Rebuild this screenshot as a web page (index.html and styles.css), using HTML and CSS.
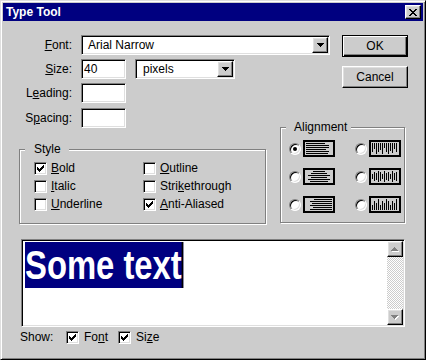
FILE: index.html
```html
<!DOCTYPE html>
<html lang="en">
<head>
    <meta charset="UTF-8">
    <title>Type Tool</title>
    <link rel="stylesheet" href="styles.css">
</head>
<body>
    <div class="window">
        <!-- Title bar -->
        <div class="titlebar">
            <span class="title">Type Tool</span>
            <span class="close-btn">
                <svg width="8" height="7" viewBox="0 0 8 7"><path d="M0 0h2v1H0z M6 0h2v1H6z M1 1h2v1H1z M5 1h2v1H5z M2 2h4v1H2z M3 3h2v1H3z M2 4h4v1H2z M1 5h2v1H1z M5 5h2v1H5z M0 6h2v1H0z M6 6h2v1H6z" fill="#000"/></svg>
            </span>
        </div>

        <div class="dialog">
            <!-- Font + OK -->
            <div class="top-row">
                <div class="field-row">
                    <label class="field-label"><u>F</u>ont:</label>
                    <div class="combo sunken combo-font">
                        <span class="combo-text">Arial Narrow</span>
                        <span class="combo-btn"><svg width="7" height="4" viewBox="0 0 7 4"><path d="M0 0h7v1H0z M1 1h5v1H1z M2 2h3v1H2z M3 3h1v1H3z" fill="#000"/></svg></span>
                    </div>
                </div>
                <button class="btn btn-default">OK</button>
            </div>

            <div class="lower">
                <div class="left-col">
                    <div class="field-row">
                        <label class="field-label"><u>S</u>ize:</label>
                        <input class="text-input sunken" type="text" value="40">
                        <div class="combo sunken combo-unit">
                            <span class="combo-text">pixels</span>
                            <span class="combo-btn"><svg width="7" height="4" viewBox="0 0 7 4"><path d="M0 0h7v1H0z M1 1h5v1H1z M2 2h3v1H2z M3 3h1v1H3z" fill="#000"/></svg></span>
                        </div>
                    </div>
                    <div class="field-row">
                        <label class="field-label">L<u>e</u>ading:</label>
                        <input class="text-input sunken" type="text" value="">
                    </div>
                    <div class="field-row spacing-row">
                        <label class="field-label">S<u>p</u>acing:</label>
                        <input class="text-input sunken" type="text" value="">
                    </div>

                    <!-- Style -->
                    <div class="group style-group">
                        <span class="group-title style-title">Style</span>
                        <div class="check-grid">
                            <span class="check"><span class="box sunken"><svg width="7" height="7" viewBox="0 0 7 7"><path d="M0 2h1v3H0z M1 3h1v3H1z M2 4h1v3H2z M3 3h1v3H3z M4 2h1v3H4z M5 1h1v3H5z M6 0h1v3H6z" fill="#000"/></svg></span><span><u>B</u>old</span></span>
                            <span class="check"><span class="box sunken"></span><span><u>I</u>talic</span></span>
                            <span class="check"><span class="box sunken"></span><span><u>U</u>nderline</span></span>
                            <span class="check"><span class="box sunken"></span><span><u>O</u>utline</span></span>
                            <span class="check"><span class="box sunken"></span><span>Stri<u>k</u>ethrough</span></span>
                            <span class="check"><span class="box sunken"><svg width="7" height="7" viewBox="0 0 7 7"><path d="M0 2h1v3H0z M1 3h1v3H1z M2 4h1v3H2z M3 3h1v3H3z M4 2h1v3H4z M5 1h1v3H5z M6 0h1v3H6z" fill="#000"/></svg></span><span><u>A</u>nti-Aliased</span></span>
                        </div>
                    </div>
                </div>

                <div class="right-col">
                    <button class="btn">Cancel</button>

                    <!-- Alignment -->
                    <div class="group align-group">
                        <span class="group-title align-title">Alignment</span>
                        <div class="align-grid">
                            <span class="align-option">
                                <span class="radio checked"></span>
                                <svg class="align-icon" width="32" height="17" viewBox="0 0 32 17"><rect x="1" y="1" width="30" height="15" fill="none" stroke="#000" stroke-width="2"/><path d="M3 3.5h19 M3 5.5h23 M3 7.5h23 M3 9.5h20 M3 11.5h23 M3 13.5h22" stroke="#000"/></svg>
                            </span>
                            <span class="align-option">
                                <span class="radio"></span>
                                <svg class="align-icon" width="32" height="17" viewBox="0 0 32 17"><rect x="1" y="1" width="30" height="15" fill="none" stroke="#000" stroke-width="2"/><path d="M3.5 3v9 M5.5 3v6 M7.5 3v11 M9.5 3v9 M11.5 3v7 M13.5 3v11 M15.5 3v5 M17.5 3v9 M19.5 3v11 M21.5 3v8 M23.5 3v10 M25.5 3v6 M27.5 3v9" stroke="#000"/></svg>
                            </span>
                            <span class="align-option">
                                <span class="radio"></span>
                                <svg class="align-icon" width="32" height="17" viewBox="0 0 32 17"><rect x="1" y="1" width="30" height="15" fill="none" stroke="#000" stroke-width="2"/><path d="M10 3.5h12 M8 5.5h16 M5 7.5h22 M8 9.5h16 M5 11.5h22 M7 13.5h18" stroke="#000"/></svg>
                            </span>
                            <span class="align-option">
                                <span class="radio"></span>
                                <svg class="align-icon" width="32" height="17" viewBox="0 0 32 17"><rect x="1" y="1" width="30" height="15" fill="none" stroke="#000" stroke-width="2"/><path d="M3.5 6v5 M5.5 4v9 M7.5 5v7 M9.5 3v11 M11.5 4v9 M13.5 6v5 M15.5 3v11 M17.5 5v7 M19.5 4v9 M21.5 6v5 M23.5 3v11 M25.5 5v7 M27.5 4v9" stroke="#000"/></svg>
                            </span>
                            <span class="align-option">
                                <span class="radio"></span>
                                <svg class="align-icon" width="32" height="17" viewBox="0 0 32 17"><rect x="1" y="1" width="30" height="15" fill="none" stroke="#000" stroke-width="2"/><path d="M11 3.5h18 M7 5.5h22 M9 7.5h20 M7 9.5h22 M10 11.5h19 M7 13.5h22" stroke="#000"/></svg>
                            </span>
                            <span class="align-option">
                                <span class="radio"></span>
                                <svg class="align-icon" width="32" height="17" viewBox="0 0 32 17"><rect x="1" y="1" width="30" height="15" fill="none" stroke="#000" stroke-width="2"/><path d="M3.5 9v5 M5.5 5v9 M7.5 7v7 M9.5 3v11 M11.5 9v5 M13.5 5v9 M15.5 7v7 M17.5 3v11 M19.5 5v9 M21.5 9v5 M23.5 5v9 M25.5 7v7 M27.5 3v11" stroke="#000"/></svg>
                            </span>
                        </div>
                    </div>
                </div>
            </div>

            <!-- Preview -->
            <div class="preview sunken">
                <div class="preview-text">
                    <span class="selection">Some text</span>
                </div>
                <div class="scrollbar">
                    <span class="scroll-btn"><svg width="8" height="5" viewBox="0 0 8 5"><path d="M4 1h1v1H4z M3 2h3v1H3z M2 3h5v1H2z M1 4h7v1H1z" fill="#fff"/><path d="M3 0h1v1H3z M2 1h3v1H2z M1 2h5v1H1z M0 3h7v1H0z" fill="#808080"/></svg></span>
                    <span class="scroll-track"></span>
                    <span class="scroll-btn"><svg width="8" height="5" viewBox="0 0 8 5"><path d="M1 1h7v1H1z M2 2h5v1H2z M3 3h3v1H3z M4 4h1v1H4z" fill="#fff"/><path d="M0 0h7v1H0z M1 1h5v1H1z M2 2h3v1H2z M3 3h1v1H3z" fill="#808080"/></svg></span>
                </div>
            </div>

            <!-- Show -->
            <div class="show-row">
                <span class="show-label">Show:</span>
                <span class="check"><span class="box sunken"><svg width="7" height="7" viewBox="0 0 7 7"><path d="M0 2h1v3H0z M1 3h1v3H1z M2 4h1v3H2z M3 3h1v3H3z M4 2h1v3H4z M5 1h1v3H5z M6 0h1v3H6z" fill="#000"/></svg></span><span>Fo<u>n</u>t</span></span>
                <span class="check"><span class="box sunken"><svg width="7" height="7" viewBox="0 0 7 7"><path d="M0 2h1v3H0z M1 3h1v3H1z M2 4h1v3H2z M3 3h1v3H3z M4 2h1v3H4z M5 1h1v3H5z M6 0h1v3H6z" fill="#000"/></svg></span><span>Si<u>z</u>e</span></span>
            </div>
        </div>
    </div>
</body>
</html>
```

FILE: styles.css
```css
/* Reset */
* {
    margin: 0;
    padding: 0;
    box-sizing: border-box;
}

body {
    font: 12px "Liberation Sans", Arial, sans-serif;
    color: #000;
    background: #ccc;
}

u {
    text-underline-offset: 1px;
}

/* Window frame */
.window {
    width: 426px;
    height: 360px;
    background: #ccc;
    border: 1px solid;
    border-color: #dfdfdf #000 #000 #dfdfdf;
    box-shadow: inset 1px 1px #fff, inset -1px -1px #808080;
    padding: 2px;
}

.titlebar {
    height: 18px;
    background: #000080;
    color: #fff;
    display: flex;
    align-items: center;
    justify-content: space-between;
    padding: 0 2px 0 3px;
}

.title {
    font-weight: bold;
    font-size: 12px;
}

/* Raised 3D look */
.close-btn,
.combo-btn,
.scroll-btn {
    display: flex;
    align-items: center;
    justify-content: center;
    background: #ccc;
    border: 1px solid;
    border-color: #fff #000 #000 #fff;
    box-shadow: inset -1px -1px #808080, inset 1px 1px #dfdfdf;
}

.close-btn {
    width: 16px;
    height: 14px;
}

/* Sunken 3D look */
.sunken {
    background: #fff;
    border: 1px solid;
    border-color: #808080 #fff #fff #808080;
    box-shadow: inset 1px 1px #000, inset -1px -1px #dfdfdf;
}

/* Dialog body */
.dialog {
    padding: 14px 15px 0 16px;
}

.top-row {
    display: flex;
    justify-content: space-between;
    align-items: flex-start;
}

.field-row {
    display: flex;
    align-items: center;
    height: 20px;
}

.field-row + .field-row {
    margin-top: 4px;
}

.field-row.spacing-row {
    margin-top: 5px;
}

.field-label {
    width: 53px;
    margin-right: 9px;
    text-align: right;
}

.text-input {
    width: 45px;
    height: 20px;
    padding: 0 2px;
    font: inherit;
    color: #000;
    outline: none;
}

.combo {
    display: flex;
    height: 20px;
    padding: 1px;
}

.combo-text {
    flex: 1;
    line-height: 16px;
    padding-left: 5px;
}

.combo-btn {
    width: 16px;
    height: 16px;
}

.combo-font {
    width: 249px;
}

.combo-unit {
    width: 100px;
    margin-left: 9px;
}

.combo-unit .combo-text {
    padding-left: 6px;
}

/* Buttons */
.btn {
    width: 66px;
    height: 22px;
    font: inherit;
    color: #000;
    background: #ccc;
    border: 1px solid;
    border-color: #fff #000 #000 #fff;
    box-shadow: inset -1px -1px #808080, inset 1px 1px #dfdfdf;
}

.btn-default {
    border: 1px solid #000;
    box-shadow: inset 1px 1px #fff, inset -1px -1px #000, inset -2px -2px #808080;
}

.lower {
    display: flex;
    justify-content: space-between;
    margin-top: 2px;
}

.left-col {
    width: 247px;
}

.right-col {
    width: 128px;
    display: flex;
    flex-direction: column;
    align-items: flex-end;
}

.right-col .btn {
    margin-top: 7px;
}

/* Group boxes */
.group {
    position: relative;
    border: 1px solid #808080;
    box-shadow: inset 1px 1px #fff, 1px 1px #fff;
}

.group-title {
    position: absolute;
    top: -8px;
    left: 5px;
    line-height: 14px;
    background: #ccc;
}

.style-group {
    margin-top: 21px;
    padding: 9px 0 10px 14px;
}

.style-title {
    padding: 0 8px 0 9px;
}

.check-grid {
    display: grid;
    grid-template-rows: repeat(3, 18px);
    grid-template-columns: 109px auto;
    grid-auto-flow: column;
}

.check {
    display: flex;
    align-items: center;
    gap: 4px;
}

.box {
    width: 13px;
    height: 13px;
    display: flex;
    align-items: center;
    justify-content: center;
}

.align-group {
    align-self: flex-start;
    width: 125px;
    margin-top: 39px;
    padding: 12px 0 9px 8px;
}

.align-title {
    padding: 0 4px 0 8px;
}

.align-grid {
    display: grid;
    grid-template-columns: repeat(2, auto);
    justify-content: start;
    column-gap: 20px;
    row-gap: 11px;
}

.align-option {
    display: flex;
    align-items: center;
    gap: 2px;
}

.radio {
    position: relative;
    width: 12px;
    height: 12px;
    border-radius: 50%;
    background: #fff;
    border: 1px solid;
    border-color: #808080 #fff #fff #808080;
    box-shadow: inset 1px 1px #000, inset -1px -1px #dfdfdf;
}

.radio.checked::after {
    content: "";
    position: absolute;
    top: 3px;
    left: 3px;
    width: 4px;
    height: 4px;
    border-radius: 50%;
    background: #000;
}

.align-icon {
    display: block;
}

/* Preview */
.preview {
    display: flex;
    width: 384px;
    height: 88px;
    margin: 15px 0 0 2px;
    padding: 1px;
}

.preview-text {
    flex: 1;
    padding: 1px 0 0 2px;
}

.selection {
    display: inline-block;
    background: #000080;
    color: #fff;
    font: bold 40px "Liberation Sans", Arial, sans-serif;
    line-height: 46px;
    border-right: 2px solid #000;
    transform: scaleX(0.82);
    transform-origin: left top;
}

.scrollbar {
    width: 16px;
    display: flex;
    flex-direction: column;
}

.scroll-btn {
    width: 16px;
    height: 16px;
}

.scroll-track {
    flex: 1;
    background: repeating-conic-gradient(#fff 0 25%, #ccc 0 50%) 0 0 / 2px 2px;
}

/* Show row */
.show-row {
    display: flex;
    align-items: center;
    height: 18px;
    margin-top: 1px;
    padding-left: 1px;
}

.show-label {
    width: 46px;
}

.show-row .check {
    margin-right: 10px;
    gap: 5px;
}
```
